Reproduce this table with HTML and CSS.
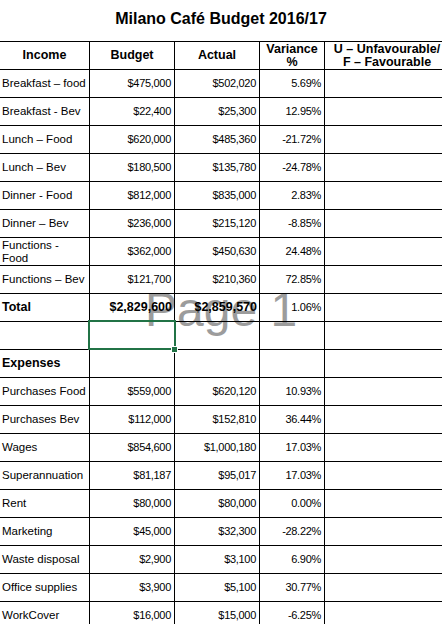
FILE: index.html
```html
<!DOCTYPE html>
<html lang="en">
<head>
<meta charset="utf-8">
<title>Milano Café Budget 2016/17</title>
<link rel="stylesheet" href="styles.css">
</head>
<body>
<div class="page">
  <h1 class="title">Milano Café Budget 2016/17</h1>
  <div class="watermark">Page 1</div>
  <div class="sheet">
    <div class="cell head">Income</div>
    <div class="cell head">Budget</div>
    <div class="cell head">Actual</div>
    <div class="cell head">Variance<br>%</div>
    <div class="cell head">U – Unfavourable/<br>F – Favourable</div>

    <div class="cell label">Breakfast – food</div><div class="cell num">$475,000</div><div class="cell num">$502,020</div><div class="cell num">5.69%</div><div class="cell"></div>
    <div class="cell label">Breakfast - Bev</div><div class="cell num">$22,400</div><div class="cell num">$25,300</div><div class="cell num">12.95%</div><div class="cell"></div>
    <div class="cell label">Lunch – Food</div><div class="cell num">$620,000</div><div class="cell num">$485,360</div><div class="cell num">-21.72%</div><div class="cell"></div>
    <div class="cell label">Lunch – Bev</div><div class="cell num">$180,500</div><div class="cell num">$135,780</div><div class="cell num">-24.78%</div><div class="cell"></div>
    <div class="cell label">Dinner - Food</div><div class="cell num">$812,000</div><div class="cell num">$835,000</div><div class="cell num">2.83%</div><div class="cell"></div>
    <div class="cell label">Dinner – Bev</div><div class="cell num">$236,000</div><div class="cell num">$215,120</div><div class="cell num">-8.85%</div><div class="cell"></div>
    <div class="cell label wrap">Functions -<br>Food</div><div class="cell num">$362,000</div><div class="cell num">$450,630</div><div class="cell num">24.48%</div><div class="cell"></div>
    <div class="cell label">Functions – Bev</div><div class="cell num">$121,700</div><div class="cell num">$210,360</div><div class="cell num">72.85%</div><div class="cell"></div>
    <div class="cell label bold">Total</div><div class="cell num bold">$2,829,600</div><div class="cell num bold">$2,859,570</div><div class="cell num">1.06%</div><div class="cell"></div>
    <div class="cell"></div><div class="cell selected"><span class="handle"></span></div><div class="cell"></div><div class="cell"></div><div class="cell"></div>
    <div class="cell label bold">Expenses</div><div class="cell"></div><div class="cell"></div><div class="cell"></div><div class="cell"></div>
    <div class="cell label">Purchases Food</div><div class="cell num">$559,000</div><div class="cell num">$620,120</div><div class="cell num">10.93%</div><div class="cell"></div>
    <div class="cell label">Purchases Bev</div><div class="cell num">$112,000</div><div class="cell num">$152,810</div><div class="cell num">36.44%</div><div class="cell"></div>
    <div class="cell label">Wages</div><div class="cell num">$854,600</div><div class="cell num">$1,000,180</div><div class="cell num">17.03%</div><div class="cell"></div>
    <div class="cell label">Superannuation</div><div class="cell num">$81,187</div><div class="cell num">$95,017</div><div class="cell num">17.03%</div><div class="cell"></div>
    <div class="cell label">Rent</div><div class="cell num">$80,000</div><div class="cell num">$80,000</div><div class="cell num">0.00%</div><div class="cell"></div>
    <div class="cell label">Marketing</div><div class="cell num">$45,000</div><div class="cell num">$32,300</div><div class="cell num">-28.22%</div><div class="cell"></div>
    <div class="cell label">Waste disposal</div><div class="cell num">$2,900</div><div class="cell num">$3,100</div><div class="cell num">6.90%</div><div class="cell"></div>
    <div class="cell label">Office supplies</div><div class="cell num">$3,900</div><div class="cell num">$5,100</div><div class="cell num">30.77%</div><div class="cell"></div>
    <div class="cell label">WorkCover</div><div class="cell num">$16,000</div><div class="cell num">$15,000</div><div class="cell num">-6.25%</div><div class="cell"></div>
  </div>
</div>
</body>
</html>
```
FILE: styles.css
```css
html, body {
  margin: 0;
  padding: 0;
  background: #ffffff;
  overflow: hidden;
}
body {
  font-family: "Liberation Sans", Arial, sans-serif;
  color: #000000;
  width: 442px;
  height: 624px;
}
.page {
  position: relative;
  width: 442px;
  height: 624px;
  overflow: hidden;
}
.title {
  margin: 0;
  height: 41px;
  box-sizing: border-box;
  padding-top: 9px;
  font-size: 16px;
  line-height: 20px;
  font-weight: bold;
  text-align: center;
}
.watermark {
  position: absolute;
  left: 145px;
  top: 286px;
  font-size: 48px;
  line-height: 48px;
  color: #9c9c9c;
  white-space: nowrap;
  z-index: 0;
}
.sheet {
  position: relative;
  z-index: 1;
  display: grid;
  grid-template-columns: 90px 85px 85px 65px 125px;
  grid-auto-rows: 28px;
  width: 450px;
  border-top: 1px solid #000000;
}
.cell {
  box-sizing: border-box;
  border-right: 1px solid #000000;
  border-bottom: 1px solid #000000;
  padding: 0 2px;
  display: flex;
  align-items: center;
  font-size: 11.5px;
  line-height: 13px;
  white-space: nowrap;
  position: relative;
}
.head {
  justify-content: center;
  text-align: center;
  font-weight: bold;
  font-size: 12.5px;
  line-height: 13px;
}
.label {
  justify-content: flex-start;
}
.num {
  justify-content: flex-end;
  font-size: 11px;
  letter-spacing: -0.3px;
  padding-right: 3px;
}
.bold {
  font-weight: bold;
  font-size: 12.5px;
  letter-spacing: 0;
}
.num.bold {
  padding-right: 2px;
}
.selected::before {
  content: "";
  position: absolute;
  left: -2px;
  top: -2px;
  width: 88px;
  height: 30px;
  box-sizing: border-box;
  border: 2px solid #217346;
}
.handle {
  position: absolute;
  right: -4px;
  bottom: -4px;
  width: 5px;
  height: 5px;
  background: #217346;
  border: 1px solid #ffffff;
  z-index: 2;
}
```
